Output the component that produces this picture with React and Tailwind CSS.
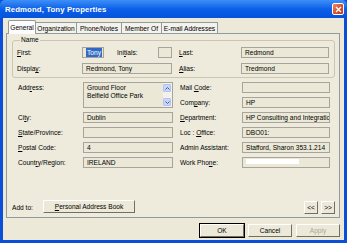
import React from 'react';

const Field = ({ w = 'w-[90px]', children, className = '' }) => (
    <div className={`${w} h-[11px] shrink-0 border border-[#a7a59b] bg-[#ebe8d7] pl-[3px] flex items-center overflow-hidden whitespace-nowrap ${className}`}>
        {children}
    </div>
);

const Row = ({ left, leftValue, right, rightValue }) => (
    <div className="flex items-center h-[11px]">
        <span className="w-[65px] shrink-0">{left}</span>
        <Field>{leftValue}</Field>
        <span className="w-[62px] shrink-0 ml-[7px]">{right}</span>
        <Field w="w-[88px]">{rightValue}</Field>
    </div>
);

const Btn = ({ children, className = '', disabled = false }) => (
    <div className={`h-[13px] flex items-center justify-center bg-[#ece9d8] border border-t-white border-l-white border-b-[#716f64] border-r-[#716f64] ${disabled ? 'text-[#aca899]' : ''} ${className}`}>
        {children}
    </div>
);

const tabs = [
    { name: 'Organization', w: 'w-[41px]' },
    { name: 'Phone/Notes', w: 'w-[45px]' },
    { name: 'Member Of', w: 'w-[40px]' },
    { name: 'E-mail Addresses', w: 'w-[56px]' },
];

const Arrow = ({ up }) => (
    <div className="h-[8px] w-[8px] bg-[#c6d5fb] border border-[#b2c5f2] rounded-[1px] flex items-center justify-center">
        <svg width="5" height="3" viewBox="0 0 5 3">
            <path d={up ? 'M0.5 2.5 L2.5 0.5 L4.5 2.5' : 'M0.5 0.5 L2.5 2.5 L4.5 0.5'} fill="none" stroke="#4d6185" strokeWidth="1" />
        </svg>
    </div>
);

export default function App() {
    return (
        <div className="w-[347px] h-[243px] flex flex-col bg-[#0a4fd8] font-['Liberation_Sans',Arial,sans-serif] text-[6.6px] leading-[9px] text-black">
            {/* Title bar */}
            <div className="h-[18px] shrink-0 flex items-center pl-[5px] pr-[3px] bg-linear-to-b from-[#3d8ff8] via-[#0b5fe8] to-[#0652dc] rounded-t-[5px]">
                <span className="text-white font-bold text-[7.8px] tracking-[0.1px]">Redmond, Tony Properties</span>
                <div className="ml-auto w-[12px] h-[12px] rounded-[2px] border border-white bg-linear-to-br from-[#e88a6c] via-[#d9532f] to-[#c0391a] flex items-center justify-center">
                    <svg width="7" height="7" viewBox="0 0 7 7">
                        <path d="M1 1 L6 6 M6 1 L1 6" stroke="white" strokeWidth="1.4" />
                    </svg>
                </div>
            </div>

            <div className="flex-1 mx-[3px] mb-[3px] bg-[#ece9d8] flex flex-col">
                {/* Tabs */}
                <div className="h-[15px] shrink-0 flex items-end pl-[5px]">
                    <div className="relative z-10 -mb-px h-[14px] w-[28px] border border-b-0 border-[#919b9c] bg-[#fcfcfe] rounded-t-[2px] flex items-center justify-center">
                        General
                    </div>
                    {tabs.map(t => (
                        <div key={t.name} className={`${t.w} h-[11px] border border-l-0 border-b-0 border-[#919b9c] bg-[#f3f2ec] flex items-center justify-center whitespace-nowrap`}>
                            {t.name}
                        </div>
                    ))}
                </div>

                {/* Panel */}
                <div className="h-[185px] shrink-0 mx-[3px] mr-[4px] border border-[#919b9c] bg-[#eeebdc] flex flex-col">
                    <fieldset className="mx-[5px] mr-[4px] mt-[2px] border border-[#c9c6b4] rounded-[3px] pl-[4px] pb-[3px]">
                        <legend className="ml-[3px] px-[1px] leading-[8px]">Name</legend>
                        <div className="flex items-center h-[11px] mt-[3px]">
                            <span className="w-[65px] shrink-0"><u>F</u>irst:</span>
                            <Field w="w-[22px]" className="pl-[2px]">
                                <span className="bg-[#316ac5] text-white px-[1px] leading-[9px]">Tony</span>
                            </Field>
                            <span className="w-[41px] shrink-0 ml-[13px]">Ini<u>t</u>ials:</span>
                            <Field w="w-[14px]" />
                            <span className="w-[62px] shrink-0 ml-[7px]"><u>L</u>ast:</span>
                            <Field w="w-[88px]">Redmond</Field>
                        </div>
                        <div className="flex items-center h-[11px] mt-[5px]">
                            <span className="w-[65px] shrink-0">Displa<u>y</u>:</span>
                            <Field>Redmond, Tony</Field>
                            <span className="w-[62px] shrink-0 ml-[7px]"><u>A</u>lias:</span>
                            <Field w="w-[88px]">Tredmond</Field>
                        </div>
                    </fieldset>

                    <div className="pl-[11px] mt-[4px] flex flex-col gap-[4px]">
                        <div className="flex">
                            <span className="w-[65px] shrink-0 pt-[1px]">Add<u>r</u>ess:</span>
                            <div className="w-[90px] h-[26px] shrink-0 border border-[#a7a59b] bg-[#ebe8d7] flex">
                                <div className="flex-1 pl-[3px] pt-[1px] leading-[8px]">
                                    <div>Ground Floor</div>
                                    <div>Belfield Office Park</div>
                                </div>
                                <div className="w-[9px] flex flex-col justify-between bg-[#f3f1ea] pt-px pb-px">
                                    <Arrow up />
                                    <Arrow />
                                </div>
                            </div>
                            <div className="flex flex-col gap-[4px] ml-[7px]">
                                <div className="flex items-center h-[11px]">
                                    <span className="w-[62px] shrink-0">Mail <u>C</u>ode:</span>
                                    <Field w="w-[88px]" />
                                </div>
                                <div className="flex items-center h-[11px]">
                                    <span className="w-[62px] shrink-0">Com<u>p</u>any:</span>
                                    <Field w="w-[88px]">HP</Field>
                                </div>
                            </div>
                        </div>
                        <Row left={<>Ci<u>t</u>y:</>} leftValue="Dublin" right={<><u>D</u>epartment:</>} rightValue="HP Consulting and Integratio" />
                        <Row left={<><u>S</u>tate/Province:</>} leftValue="" right={<>Loc : <u>O</u>ffice:</>} rightValue="DBO01:" />
                        <Row left={<><u>P</u>ostal Code:</>} leftValue="4" right="Admin Assistant:" rightValue="Stafford, Sharon 353.1.214" />
                        <Row
                            left={<>Count<u>r</u>y/Region:</>}
                            leftValue="IRELAND"
                            right={<>Work Pho<u>n</u>e:</>}
                            rightValue={<span className="block w-[53px] h-[5px] bg-white -mt-[3px]" />}
                        />
                    </div>

                    <div className="mt-auto mb-[3px] flex items-center pl-[5px] pr-[4px]">
                        <span className="w-[31px] shrink-0">Add to:</span>
                        <Btn className="w-[92px] h-[12px] mb-[1px]"><span><u>P</u>ersonal Address Book</span></Btn>
                        <Btn className="w-[14px] h-[11px] ml-auto">&lt;&lt;</Btn>
                        <Btn className="w-[14px] h-[11px] ml-[3px]">&gt;&gt;</Btn>
                    </div>
                </div>

                {/* Dialog buttons */}
                <div className="mt-[6px] flex justify-end gap-[4px] pr-[4px]">
                    <Btn className="w-[44px] outline outline-1 outline-black -outline-offset-0">OK</Btn>
                    <Btn className="w-[44px]">Cancel</Btn>
                    <Btn className="w-[44px]" disabled>Apply</Btn>
                </div>
            </div>
        </div>
    );
}
